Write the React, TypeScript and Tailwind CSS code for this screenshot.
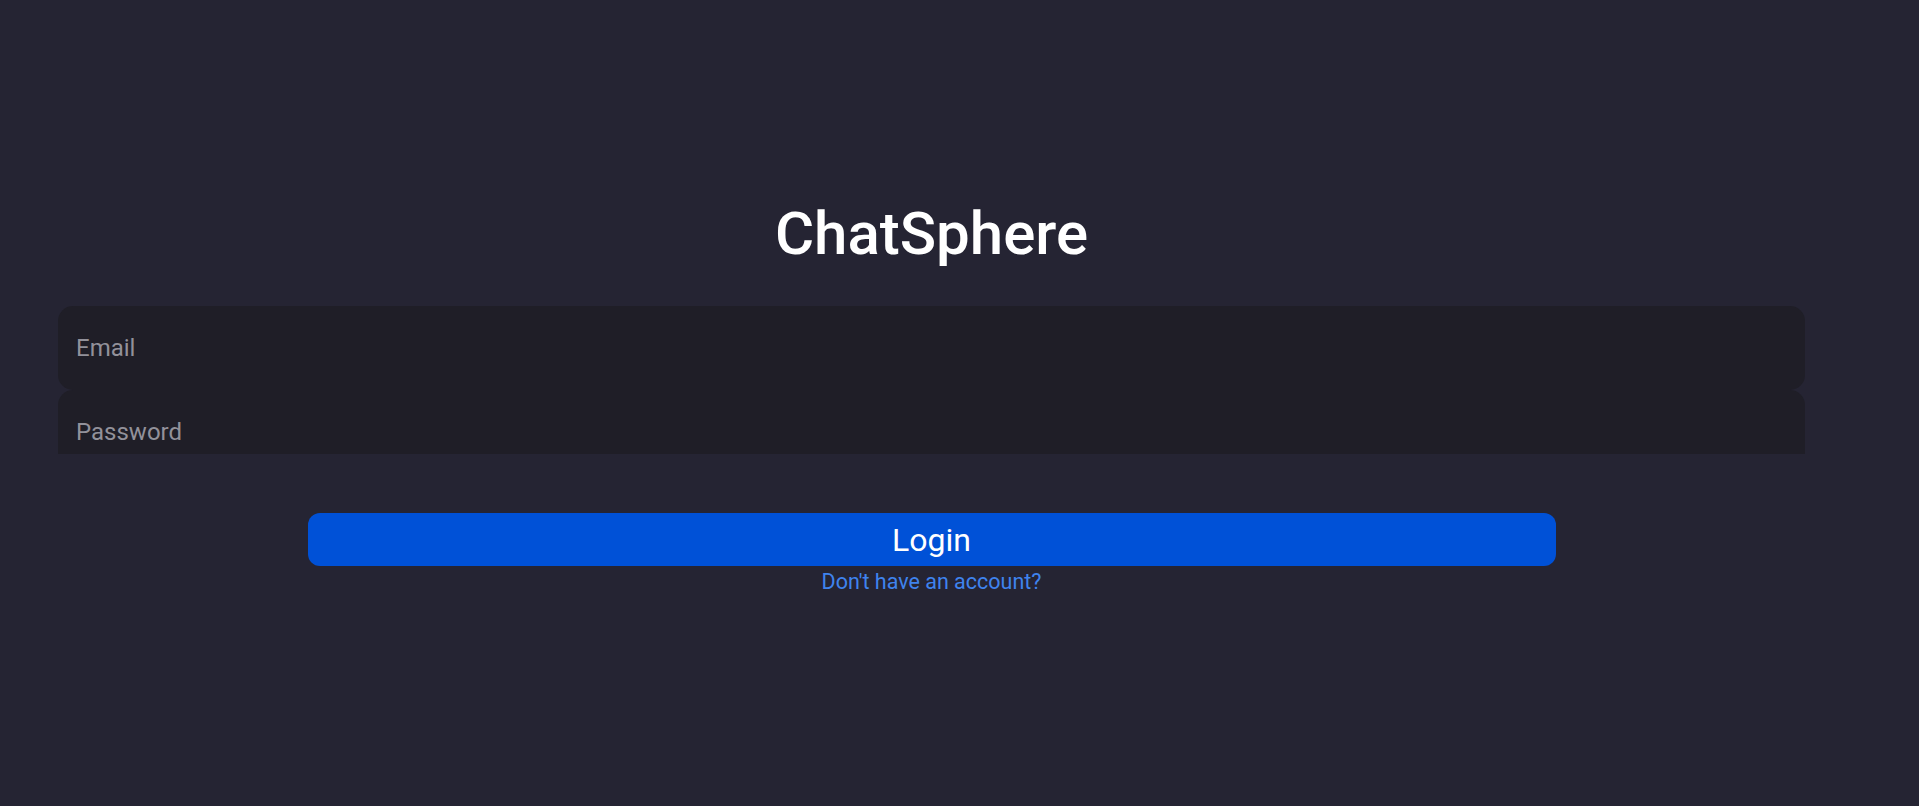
const App = () => {
  return (
    <div className="min-h-screen w-full bg-[#252433] font-['Roboto',sans-serif]">
      <div className="flex w-[1863px] flex-col items-center pt-[204px]">
        <h1 className="text-[60px] leading-[60px] font-medium text-white">
          ChatSphere
        </h1>
        <form
          className="mt-[42px] flex flex-col items-center"
          onSubmit={(e) => e.preventDefault()}
        >
          <div className="flex h-[148px] w-[1747px] flex-col overflow-hidden">
            <input
              type="email"
              placeholder="Email"
              className="h-[84px] w-full shrink-0 rounded-[15px] bg-[#1f1e27] px-[18px] text-[24px] text-white outline-none placeholder:text-[#92919a]"
            />
            <input
              type="password"
              placeholder="Password"
              className="h-[84px] w-full shrink-0 rounded-[15px] bg-[#1f1e27] px-[18px] text-[24px] text-white outline-none placeholder:text-[#92919a]"
            />
          </div>
          <button
            type="submit"
            className="mt-[59px] h-[53px] w-[1248px] rounded-xl bg-[#0051d7] text-[32px] leading-none text-white"
          >
            Login
          </button>
          <a href="#" className="text-[21.5px] leading-[1.5] text-[#3f83ee]">
            Don't have an account?
          </a>
        </form>
      </div>
    </div>
  );
};

export default App;
